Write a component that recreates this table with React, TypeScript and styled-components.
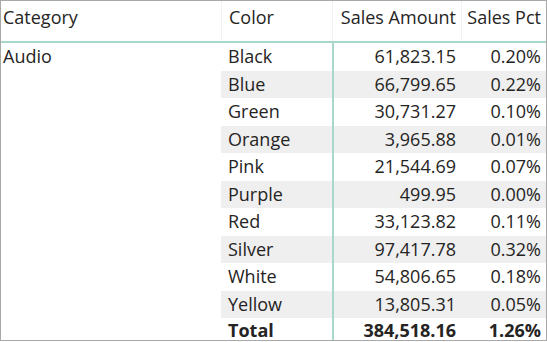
import React from "react";
import styled, { createGlobalStyle } from "styled-components";

const Global = createGlobalStyle`
  html, body { margin: 0; padding: 0; background: #fff; }
  body { font-family: "Open Sans", "Noto Sans", sans-serif; }
`;

const Frame = styled.div`
  width: 547px;
  height: 341px;
  box-sizing: border-box;
  border: 1px solid #a8a8a8;
  overflow: hidden;
  color: #252423;
  font-size: 18px;
`;

const COLS = "220px 111px 129px 1fr";

const HeaderRow = styled.div`
  display: grid;
  grid-template-columns: ${COLS};
  height: 40px;
  border-bottom: 2px solid #a9d7cc;
`;

const HeadCell = styled.div<{ $right?: boolean; $sep?: boolean; $indent?: boolean }>`
  display: flex;
  align-items: center;
  justify-content: ${(p) => (p.$right ? "flex-end" : "flex-start")};
  padding: 0 ${(p) => (p.$right ? "5px" : "0")} 8px ${(p) => (p.$right ? "0" : p.$indent ? "7px" : "2px")};
  border-left: ${(p) => (p.$sep ? "1px solid #f2f2f2" : "none")};
  white-space: nowrap;
`;

const Body = styled.div`
  display: grid;
  grid-template-columns: ${COLS};
  grid-auto-rows: 27.5px;
`;

const CategoryCell = styled.div`
  grid-row: span 11;
  padding: 0 0 0 2px;
  line-height: 27px;
`;

const Cell = styled.div<{ $stripe?: boolean; $right?: boolean; $bold?: boolean; $divider?: boolean }>`
  background: ${(p) => (p.$stripe ? "#efefef" : "transparent")};
  text-align: ${(p) => (p.$right ? "right" : "left")};
  padding: ${(p) => (p.$right ? "0 5px 0 0" : "0 0 0 7px")};
  font-weight: ${(p) => (p.$bold ? 700 : 400)};
  border-left: ${(p) => (p.$divider ? "2px solid #a9d7cc" : "none")};
  line-height: ${(p) => (p.$bold ? "25px" : "27px")};
  white-space: nowrap;
`;

const rows = [
  ["Black", "61,823.15", "0.20%"],
  ["Blue", "66,799.65", "0.22%"],
  ["Green", "30,731.27", "0.10%"],
  ["Orange", "3,965.88", "0.01%"],
  ["Pink", "21,544.69", "0.07%"],
  ["Purple", "499.95", "0.00%"],
  ["Red", "33,123.82", "0.11%"],
  ["Silver", "97,417.78", "0.32%"],
  ["White", "54,806.65", "0.18%"],
  ["Yellow", "13,805.31", "0.05%"],
];

export default function App() {
  return (
    <>
      <Global />
      <Frame>
        <HeaderRow>
          <HeadCell>Category</HeadCell>
          <HeadCell $sep $indent>Color</HeadCell>
          <HeadCell $right $sep>Sales Amount</HeadCell>
          <HeadCell $right $sep>Sales Pct</HeadCell>
        </HeaderRow>
        <Body>
          <CategoryCell>Audio</CategoryCell>
          {rows.map(([c, a, p], i) => {
            const s = i % 2 === 1;
            return (
              <React.Fragment key={c}>
                <Cell $stripe={s}>{c}</Cell>
                <Cell $stripe={s} $right $divider>{a}</Cell>
                <Cell $stripe={s} $right>{p}</Cell>
              </React.Fragment>
            );
          })}
          <Cell $bold>Total</Cell>
          <Cell $right $bold $divider>384,518.16</Cell>
          <Cell $right $bold>1.26%</Cell>
        </Body>
      </Frame>
    </>
  );
}
